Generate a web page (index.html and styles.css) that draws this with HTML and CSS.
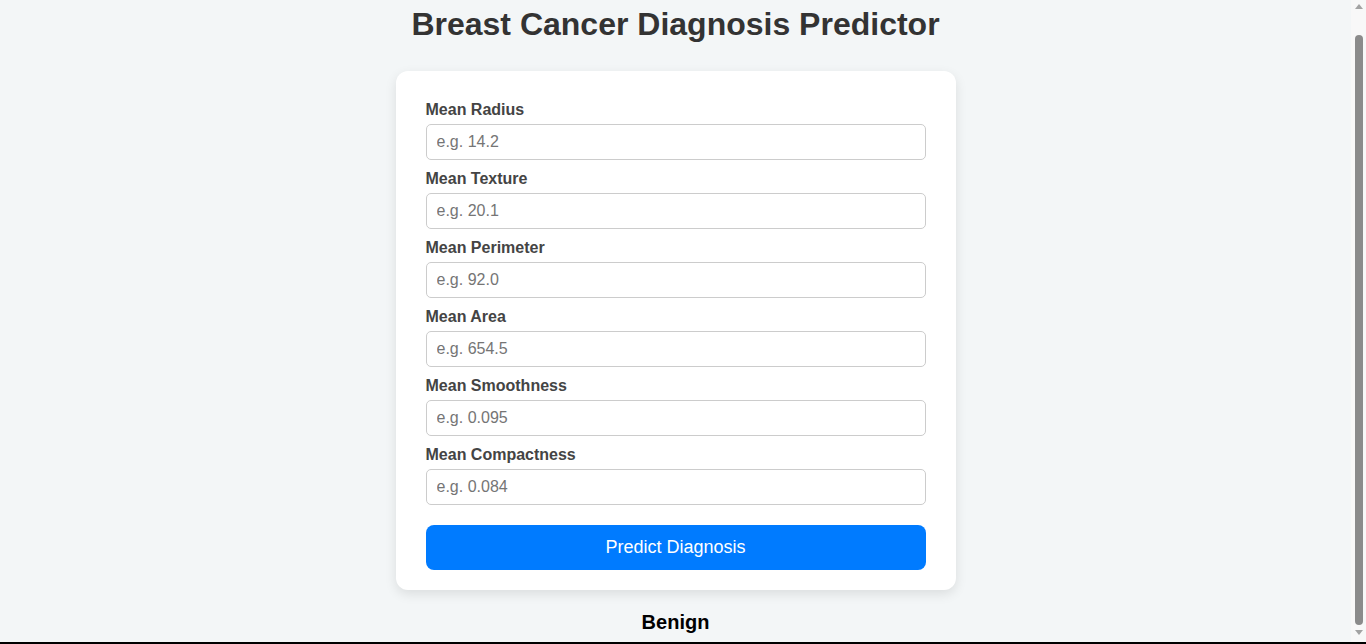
FILE: index.html
```html
<!DOCTYPE html>
<html lang="en">
<head>
<meta charset="utf-8">
<title>Breast Cancer Diagnosis Predictor</title>
<link rel="stylesheet" href="styles.css">
</head>
<body>
<h1 class="title">Breast Cancer Diagnosis Predictor</h1>
<form class="card">
  <label class="field-label" for="radius">Mean Radius</label>
  <input class="field-input" id="radius" type="text" placeholder="e.g. 14.2">
  <label class="field-label" for="texture">Mean Texture</label>
  <input class="field-input" id="texture" type="text" placeholder="e.g. 20.1">
  <label class="field-label" for="perimeter">Mean Perimeter</label>
  <input class="field-input" id="perimeter" type="text" placeholder="e.g. 92.0">
  <label class="field-label" for="area">Mean Area</label>
  <input class="field-input" id="area" type="text" placeholder="e.g. 654.5">
  <label class="field-label" for="smoothness">Mean Smoothness</label>
  <input class="field-input" id="smoothness" type="text" placeholder="e.g. 0.095">
  <label class="field-label" for="compactness">Mean Compactness</label>
  <input class="field-input" id="compactness" type="text" placeholder="e.g. 0.084">
  <button class="predict-btn" type="button">Predict Diagnosis</button>
</form>
<div class="result">Benign</div>
<div class="fake-scrollbar" aria-hidden="true">
  <span class="sb-arrow sb-up"></span>
  <span class="sb-thumb"></span>
  <span class="sb-arrow sb-down"></span>
</div>
<div class="frame-edge"></div>
</body>
</html>
```
FILE: styles.css
```css
html {
  background: #f3f6f7;
}
body {
  margin: 0 15px 0 0;
  padding: 6px 20px 32px;
  font-family: "Liberation Sans", Arial, sans-serif;
  background: #f3f6f7;
}
.title {
  margin: 0 0 28px;
  font-size: 32px;
  line-height: 37px;
  font-weight: bold;
  text-align: center;
  color: #333;
}
.card {
  max-width: 500px;
  margin: 0 auto;
  padding: 30px 30px 20px;
  background: #fff;
  border-radius: 12px;
  box-shadow: 0 4px 12px rgba(0, 0, 0, 0.1);
}
.field-label {
  display: block;
  font-size: 16px;
  line-height: 18px;
  font-weight: bold;
  color: #444;
  margin-bottom: 5px;
}
.field-input {
  display: block;
  width: 100%;
  box-sizing: border-box;
  height: 36px;
  margin: 0 0 10px;
  padding: 0 10px;
  font-family: inherit;
  font-size: 16px;
  color: #333;
  background: #fff;
  border: 1px solid #ccc;
  border-radius: 5px;
  outline: none;
}
.field-input::placeholder {
  color: #757575;
}
.predict-btn {
  display: block;
  width: 100%;
  height: 45px;
  margin-top: 20px;
  padding: 0;
  font-family: inherit;
  font-size: 18px;
  color: #fff;
  background: #007bff;
  border: none;
  border-radius: 8px;
  cursor: pointer;
}
.result {
  margin-top: 21px;
  text-align: center;
  font-size: 20px;
  line-height: 23px;
  font-weight: bold;
  color: #000;
}
.fake-scrollbar {
  position: fixed;
  top: 0;
  right: 0;
  bottom: 0;
  width: 15px;
  background: #f8f8f8;
  display: flex;
  flex-direction: column;
  align-items: center;
}
.sb-arrow {
  width: 0;
  height: 0;
  border-left: 4px solid transparent;
  border-right: 4px solid transparent;
}
.sb-up {
  margin-top: 4px;
  border-bottom: 5px solid #a3a3a3;
}
.sb-down {
  margin-top: 5px;
  border-top: 5px solid #a3a3a3;
}
.sb-thumb {
  display: block;
  width: 8px;
  margin-top: 26px;
  flex: 0 0 590px;
  background: #8b8b8b;
  border-radius: 4px;
}
.frame-edge {
  position: fixed;
  left: 0;
  right: 0;
  bottom: 0;
  height: 2px;
  background: #000;
}
```
